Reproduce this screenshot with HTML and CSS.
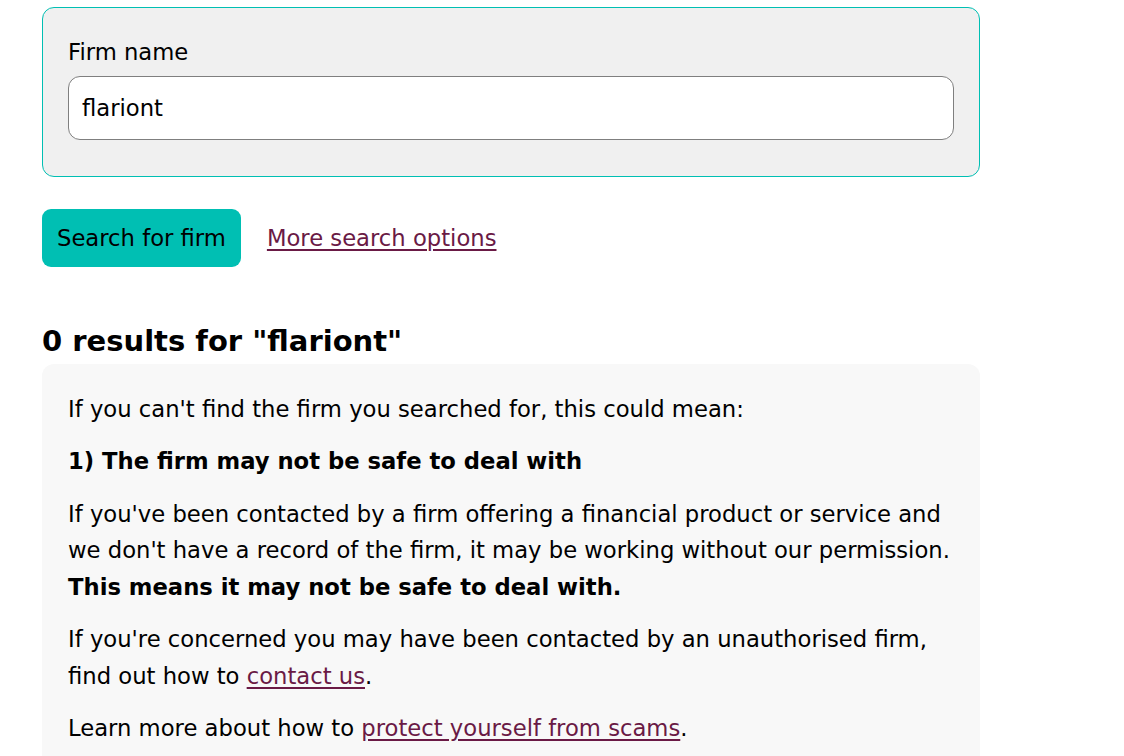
FILE: index.html
```html
<!DOCTYPE html>
<html lang="en">
<head>
<meta charset="utf-8">
<title>Firm search</title>
<link rel="stylesheet" href="styles.css">
</head>
<body>
<main class="page">
  <form class="search">
    <div class="field">
      <label class="label" for="firm">Firm name</label>
      <input class="input" id="firm" type="text" value="flariont">
    </div>
    <div class="actions">
      <button class="btn" type="button">Search for firm</button>
      <a class="link" href="#">More search options</a>
    </div>
  </form>
  <h2 class="results">0 results for "flariont"</h2>
  <section class="notice">
    <p>If you can't find the firm you searched for, this could mean:</p>
    <p class="strong">1) The firm may not be safe to deal with</p>
    <p>If you've been contacted by a firm offering a financial product or service and we don't have a record of the firm, it may be working without our permission. <strong>This means it may not be safe to deal with.</strong></p>
    <p>If you're concerned you may have been contacted by an unauthorised firm, find out how to <a class="link" href="#">contact us</a>.</p>
    <p>Learn more about how to <a class="link" href="#">protect yourself from scams</a>.</p>
  </section>
</main>
</body>
</html>
```
FILE: styles.css
```css
html, body {
  margin: 0;
  padding: 0;
  background: #ffffff;
}
body {
  font-family: "DejaVu Sans", Verdana, sans-serif;
  color: #000;
  font-size: 22.7px;
}
.page {
  width: 938px;
  margin-left: 42px;
  padding-top: 7px;
}
.field {
  border: 1px solid #00bfb3;
  border-radius: 12px;
  background: #f0f0f0;
  padding: 29px 25px 36px 25px;
}
.label {
  display: block;
  font-size: 22.7px;
  line-height: 30px;
  margin-bottom: 9px;
}
.input {
  box-sizing: border-box;
  display: block;
  width: 100%;
  height: 64px;
  border: 1px solid #7f7f7f;
  border-radius: 12px;
  background: #fff;
  font-family: inherit;
  font-size: 22.7px;
  padding: 0 13px;
  color: #000;
  outline: none;
}
.actions {
  display: flex;
  align-items: center;
  gap: 26px;
  margin-top: 32px;
}
.btn {
  height: 58px;
  padding: 0 15px;
  border: 0;
  border-radius: 9px;
  background: #00bfb3;
  color: #000;
  font-family: inherit;
  font-size: 22.7px;
}
.link {
  color: #6a1a45;
  text-decoration: underline;
  text-underline-offset: 3px;
}
.results {
  font-size: 29px;
  line-height: 36px;
  font-weight: bold;
  margin: 56px 0 5px 0;
}
.notice {
  background: #f8f8f8;
  border-radius: 12px;
  padding: 27px 20px 20px 26px;
}
.notice p {
  margin: 0 0 15.6px 0;
  line-height: 36.7px;
}
.notice .strong {
  font-weight: bold;
}
```
